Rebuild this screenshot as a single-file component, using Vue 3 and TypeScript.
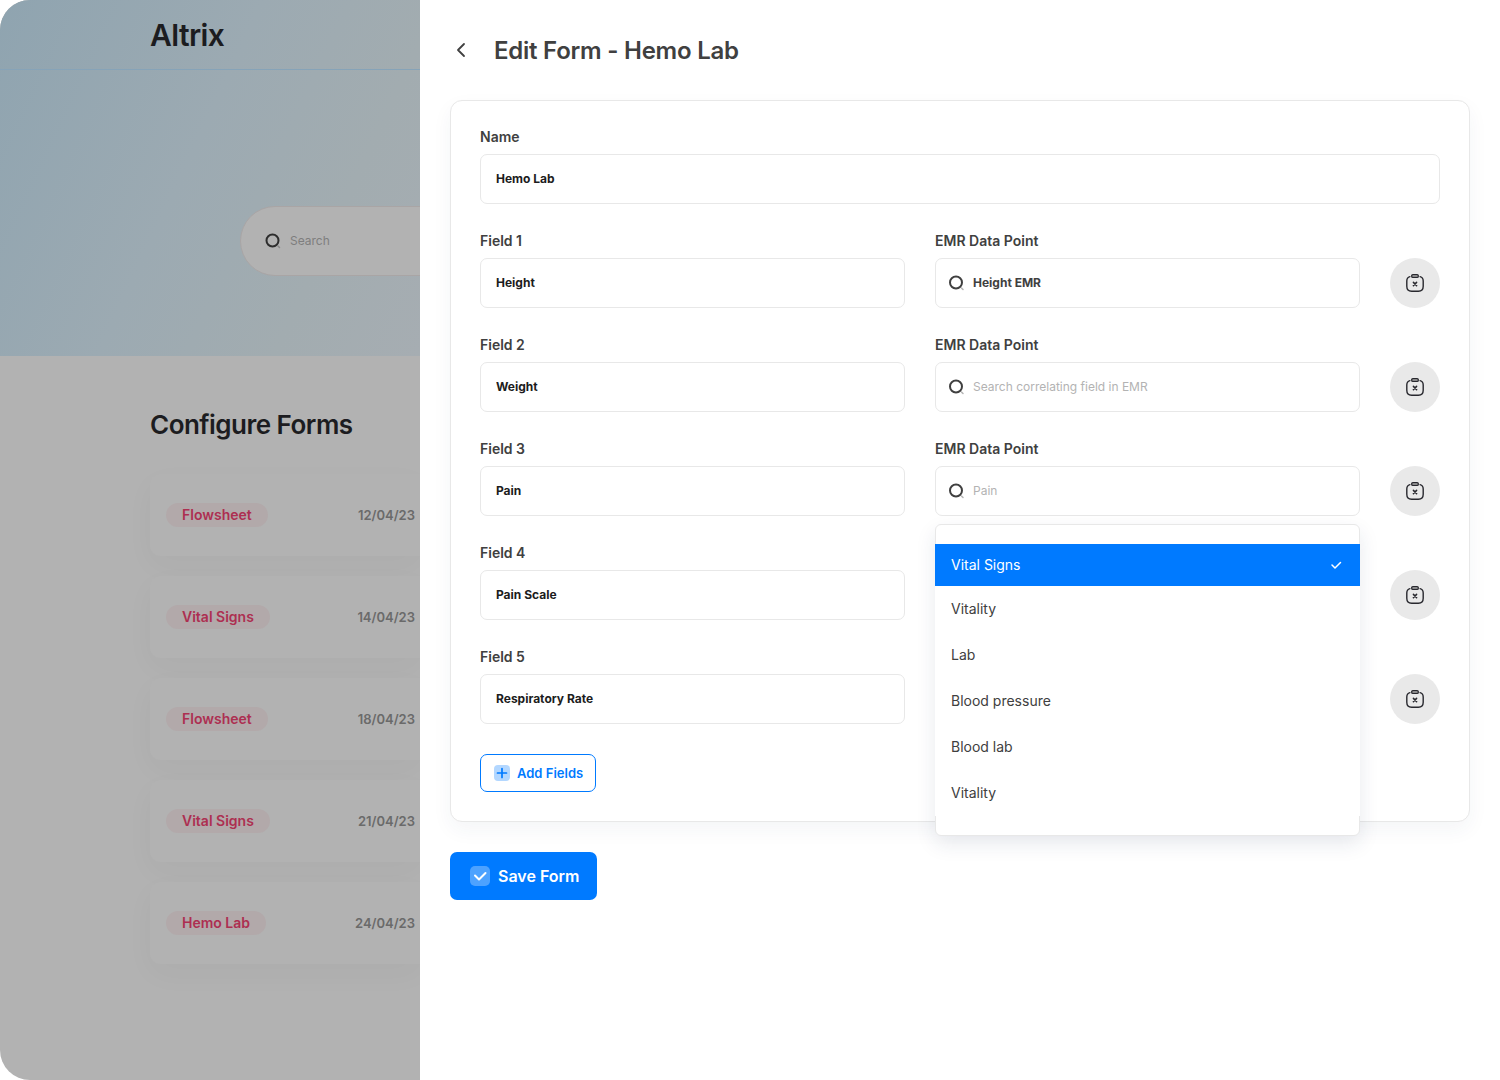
<script setup lang="ts">
import { ref } from 'vue'

interface FormEntry {
  name: string
  date: string
}

interface Field {
  name: string
  emr: string
  placeholder: string
}

const forms: FormEntry[] = [
  { name: 'Flowsheet', date: '12/04/23' },
  { name: 'Vital Signs', date: '14/04/23' },
  { name: 'Flowsheet', date: '18/04/23' },
  { name: 'Vital Signs', date: '21/04/23' },
  { name: 'Hemo Lab', date: '24/04/23' },
]

const search = ref('')
const formName = ref('Hemo Lab')
const emrHint = 'Search correlating field in EMR'

const fields = ref<Field[]>([
  { name: 'Height', emr: 'Height EMR', placeholder: emrHint },
  { name: 'Weight', emr: '', placeholder: emrHint },
  { name: 'Pain', emr: '', placeholder: 'Pain' },
  { name: 'Pain Scale', emr: '', placeholder: emrHint },
  { name: 'Respiratory Rate', emr: '', placeholder: emrHint },
])

const openIndex = ref(2)
const selected = ref(0)
const options: string[] = ['Vital Signs', 'Vitality', 'Lab', 'Blood pressure', 'Blood lab', 'Vitality']

// Lookups that the open menu covers are left out while it is open.
function lookupShown(index: number): boolean {
  return openIndex.value < 0 || index <= openIndex.value || index > openIndex.value + 2
}

function choose(option: number): void {
  selected.value = option
  fields.value[openIndex.value].emr = options[option]
  openIndex.value = -1
}

function addField(): void {
  fields.value.push({ name: '', emr: '', placeholder: emrHint })
}

function removeField(index: number): void {
  fields.value.splice(index, 1)
}
</script>

<template>
  <div class="app">
    <aside class="backdrop">
      <div class="hero">
        <header class="brand-bar"><span class="brand">Altrix</span></header>
        <label class="hero-search">
          <svg class="search-icon" width="18" height="18" viewBox="0 0 18 18" fill="none" aria-hidden="true">
            <circle cx="8.500" cy="8.500" r="6" stroke="#2d2d2d" stroke-width="2" />
            <path d="M14 14L15.500 15.500" stroke="#888" stroke-width="1.500" stroke-linecap="round" />
          </svg>
          <input v-model="search" type="text" placeholder="Search" aria-label="Search" />
        </label>
      </div>
      <section class="forms">
        <h2>Configure Forms</h2>
        <ul class="form-list">
          <li v-for="(form, i) in forms" :key="i" class="form-card">
            <span class="tag">{{ form.name }}</span>
            <time class="date">{{ form.date }}</time>
          </li>
        </ul>
      </section>
    </aside>

    <main class="panel">
      <header class="panel-head">
        <button type="button" class="back" aria-label="Back">
          <svg width="22" height="22" viewBox="0 0 22 22" fill="none" aria-hidden="true">
            <path d="M14 5L8 11L14 17" stroke="#404040" stroke-width="1.800" stroke-linecap="round" stroke-linejoin="round" />
          </svg>
        </button>
        <h1>Edit Form - Hemo Lab</h1>
      </header>

      <section class="card">
        <div class="control">
          <label for="form-name">Name</label>
          <input id="form-name" v-model="formName" type="text" class="box" />
        </div>

        <div v-for="(field, i) in fields" :key="i" class="row">
          <div class="control">
            <label :for="`field-${i}`">Field {{ i + 1 }}</label>
            <input :id="`field-${i}`" v-model="field.name" type="text" class="box" />
          </div>
          <div v-if="lookupShown(i)" class="control">
            <label :for="`emr-${i}`">EMR Data Point</label>
            <div class="box lookup">
              <svg class="search-icon" width="18" height="18" viewBox="0 0 18 18" fill="none" aria-hidden="true">
                <circle cx="8" cy="8.500" r="6" stroke="#404040" stroke-width="2" />
                <path d="M13.500 14L15 15.500" stroke="#b5b5b5" stroke-width="1.500" stroke-linecap="round" />
              </svg>
              <input :id="`emr-${i}`" v-model="field.emr" type="text" :placeholder="field.placeholder" />
            </div>
            <ul v-if="i === openIndex" class="menu" role="listbox" aria-label="EMR Data Point">
              <li v-for="(option, n) in options" :key="n" role="option" :aria-selected="n === selected">
                <button type="button" :class="['option', { chosen: n === selected }]" @click="choose(n)">
                  <span>{{ option }}</span>
                  <svg v-if="n === selected" width="16" height="16" viewBox="0 0 16 16" fill="none" aria-hidden="true">
                    <path d="M4 9L7 12L12.500 6.500" stroke="#fff" stroke-width="1.500" stroke-linecap="round" stroke-linejoin="round" />
                  </svg>
                </button>
              </li>
            </ul>
          </div>
          <button type="button" class="remove" :aria-label="`Remove field ${i + 1}`" @click="removeField(i)">
            <svg width="20" height="20" viewBox="0 0 20 20" fill="none" stroke="#28282e" aria-hidden="true">
              <path d="M4.900 3.600C2.700 4.100 1.800 5.300 1.800 8V13.200C1.800 17 3.200 18.200 6.600 18.200H13.400C16.800 18.200 18.200 17 18.200 13.200V8C18.200 5.300 17.300 4.100 15.100 3.600" stroke-width="1.400" stroke-linecap="round" />
              <rect x="6.700" y="1.600" width="6.600" height="2.800" rx="1.200" stroke-width="1.300" fill="#aaa" />
              <path d="M8.400 9.400L11.600 12.600M11.600 9.400L8.400 12.600" stroke-width="1.500" stroke-linecap="round" />
            </svg>
          </button>
        </div>

        <button type="button" class="add" @click="addField">
          <svg width="18" height="18" viewBox="0 0 18 18" fill="none" aria-hidden="true">
            <rect x="1" y="1" width="16" height="16" rx="4" fill="#b3d7ff" />
            <path d="M9 4.500V13.500M4.500 9H13.500" stroke="#007aff" stroke-width="1.700" stroke-linecap="round" />
          </svg>
          Add Fields
        </button>
      </section>

      <button type="button" class="save">
        <svg width="20" height="20" viewBox="0 0 20 20" fill="none" aria-hidden="true">
          <rect width="20" height="20" rx="5" fill="#4da2ff" />
          <path d="M5 9.500L9 13.500L15.500 7" stroke="#fff" stroke-width="2" stroke-linecap="round" stroke-linejoin="round" />
        </svg>
        Save Form
      </button>
    </main>
  </div>
</template>

<style>
body {
  background: #fff;
}
</style>

<style scoped>
.app,
.app * {
  box-sizing: border-box;
}

.app {
  display: flex;
  min-height: 100vh;
  font-family: Inter, "Liberation Sans", sans-serif;
  color: #404040;
}

input,
button {
  font-family: inherit;
}

button {
  cursor: pointer;
}

h1,
h2,
ul {
  margin: 0;
  padding: 0;
}

ul {
  list-style: none;
}

.backdrop {
  flex: 0 0 28%;
  overflow: hidden;
  border-radius: 30px 0 0 30px;
  background: #b2b2b2;
}

.hero {
  height: 356px;
  background: linear-gradient(115deg, #8fa4b0 0%, #9caab2 45%, #a2acb0 75%, #a6adb2 100%);
}

.brand-bar {
  height: 70px;
  padding-left: 150px;
  border-bottom: 1px solid #86a3b8;
}

.brand {
  font-size: 30px;
  font-weight: 600;
  line-height: 70px;
  letter-spacing: -0.02em;
  color: #1c1c20;
}

.hero-search {
  display: flex;
  align-items: center;
  gap: 8px;
  width: 600px;
  height: 70px;
  margin: 136px 0 0 240px;
  padding-left: 23px;
  border: 1px solid #a9a5a5;
  border-radius: 35px;
  background: #b2b2b2;
}

.search-icon {
  flex: none;
}

.hero-search input {
  flex: 1;
  padding: 0;
  border: 0;
  outline: 0;
  background: none;
  font-size: 12px;
  line-height: 20px;
}

.hero-search input::placeholder {
  color: #7e7e7e;
}

.forms {
  padding: 51px 0 0 150px;
}

.forms h2 {
  font-size: 26px;
  font-weight: 600;
  line-height: 36px;
  letter-spacing: -0.02em;
  white-space: nowrap;
  color: #1c1c20;
}

.form-list {
  display: grid;
  gap: 20px;
  margin-top: 31px;
}

.form-card {
  display: flex;
  align-items: center;
  justify-content: space-between;
  height: 82px;
  padding: 0 5px 0 16px;
  border-radius: 10px 0 0 10px;
  background: #b2b2b2;
  box-shadow: 0 10px 30px rgba(0, 0, 0, 0.03);
}

.tag {
  padding: 0 16px;
  border-radius: 12px;
  background: #b2a9aa;
  font-size: 14px;
  font-weight: 600;
  line-height: 24px;
  color: #ad2f51;
}

.date {
  font-size: 13px;
  font-weight: 600;
  line-height: 24px;
  color: #6a6a6a;
}

.panel {
  flex: 1;
  min-width: 0;
  padding: 30px;
}

.panel-head {
  display: flex;
  align-items: center;
  gap: 22px;
  height: 40px;
}

.panel-head h1 {
  font-size: 24px;
  font-weight: 600;
  line-height: 40px;
  padding-top: 2px;
  letter-spacing: -0.01em;
}

.back {
  display: flex;
  padding: 0;
  border: 0;
  background: none;
}

.card {
  display: flex;
  flex-direction: column;
  gap: 25px;
  margin-top: 30px;
  padding: 24px 29px 29px;
  border: 1px solid #e8e8e8;
  border-radius: 12px;
  background: #fff;
  box-shadow: 0 8px 20px rgba(30, 50, 90, 0.05);
}

.row {
  display: grid;
  grid-template-columns: 1fr 1fr 50px;
  gap: 30px;
  align-items: end;
}

.control {
  position: relative;
  display: flex;
  flex-direction: column;
  gap: 5px;
  min-width: 0;
}

.control label {
  font-size: 14px;
  font-weight: 600;
  line-height: 24px;
}

.box {
  width: 100%;
  height: 50px;
  padding: 0 15px 2px;
  border: 1px solid #e8e8e8;
  border-radius: 7px;
  outline: 0;
  background: #fff;
  font-size: 12px;
  font-weight: 700;
  color: #1c1c20;
}

.lookup {
  display: flex;
  align-items: center;
  gap: 7px;
  padding: 0 12px;
}

.lookup input {
  flex: 1;
  min-width: 0;
  padding: 0 0 2px;
  border: 0;
  outline: 0;
  background: none;
  font-size: 12px;
  font-weight: 700;
  color: #404040;
}

.lookup input::placeholder {
  font-weight: 400;
  color: #b3b3b3;
}

.menu {
  position: absolute;
  z-index: 2;
  top: calc(100% + 8px);
  left: 0;
  right: 0;
  padding: 19px 0;
  border: 1px solid #e8e8e8;
  border-radius: 6px;
  background: #fff;
  box-shadow: 0 8px 20px rgba(30, 50, 90, 0.1);
}

.menu li {
  margin: 0 -1px;
}

.option {
  display: flex;
  align-items: center;
  justify-content: space-between;
  width: 100%;
  height: 46px;
  padding: 0 16px 2px;
  border: 0;
  background: #fff;
  font-size: 14px;
  text-align: left;
  color: #404040;
}

.option.chosen {
  height: 42px;
  background: #007aff;
  color: #fff;
}

.remove {
  grid-column: 3;
  display: flex;
  align-items: center;
  justify-content: center;
  height: 50px;
  padding: 0;
  border: 0;
  border-radius: 50%;
  background: #e9e9e9;
}

.add {
  display: flex;
  align-items: center;
  align-self: flex-start;
  gap: 6px;
  height: 38px;
  margin-top: 5px;
  padding: 0 12px;
  border: 1px solid #007aff;
  border-radius: 7px;
  background: #fff;
  font-size: 13px;
  font-weight: 600;
  color: #007aff;
}

.save {
  display: flex;
  align-items: center;
  gap: 8px;
  height: 48px;
  margin-top: 30px;
  padding: 0 18px 0 20px;
  border: 0;
  border-radius: 7px;
  background: #007aff;
  font-size: 16px;
  font-weight: 600;
  color: #fff;
}
</style>
